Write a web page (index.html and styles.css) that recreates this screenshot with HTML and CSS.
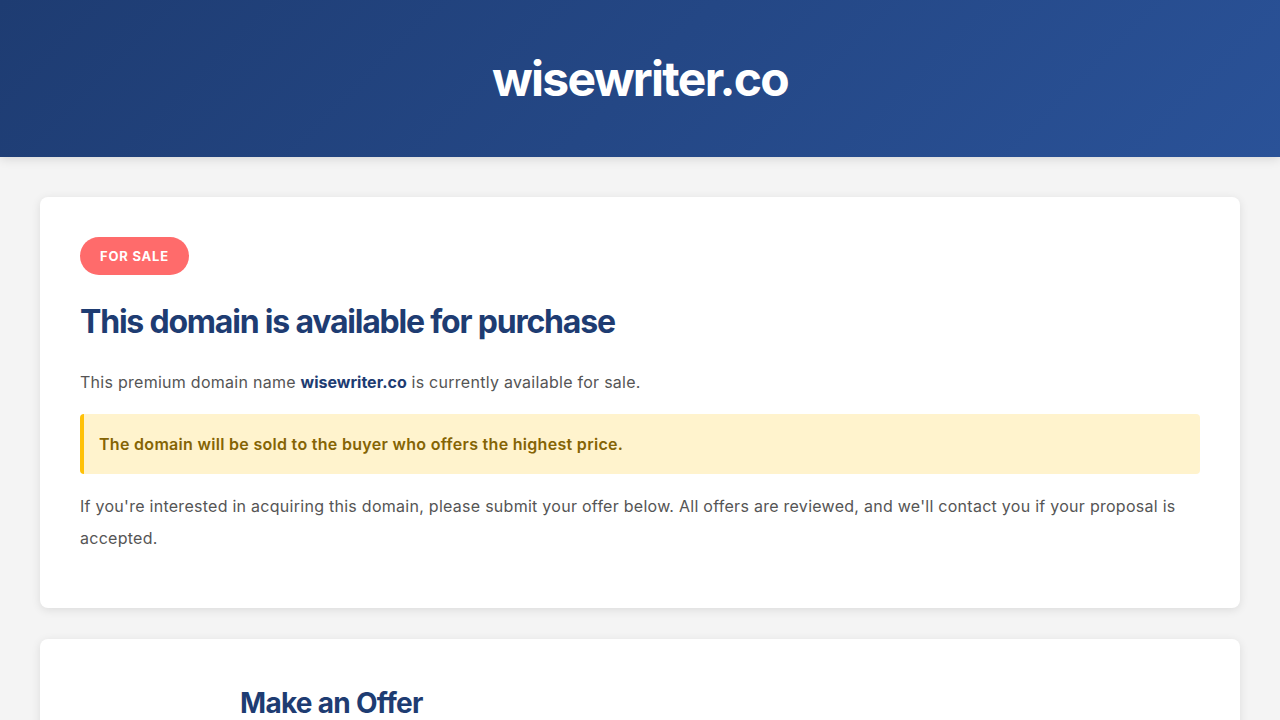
FILE: index.html
```html
<!DOCTYPE html>
<html lang="en">
<head>
<meta charset="utf-8">
<title>wisewriter.co - Domain For Sale</title>
<link rel="stylesheet" href="styles.css">
</head>
<body>
<header class="site-header">
  <h1 class="site-title">wisewriter.co</h1>
</header>
<main class="container">
  <section class="card">
    <span class="badge">FOR SALE</span>
    <h2 class="card-title">This domain is available for purchase</h2>
    <p class="text">This premium domain name <strong class="domain">wisewriter.co</strong> is currently available for sale.</p>
    <div class="notice">The domain will be sold to the buyer who offers the highest price.</div>
    <p class="text last">If you're interested in acquiring this domain, please submit your offer below. All offers are reviewed, and we'll contact you if your proposal is accepted.</p>
  </section>
  <section class="card">
    <div class="form-wrap">
      <h2 class="form-title">Make an Offer</h2>
    </div>
  </section>
</main>
</body>
</html>
```
FILE: styles.css
```css
* { box-sizing: border-box; }
html, body { margin: 0; padding: 0; }
body {
  background: #f4f4f4;
  font-family: Inter, "Noto Sans", sans-serif;
  color: #555;
}
.site-header {
  background: linear-gradient(135deg, #1e3c72 0%, #2a5298 100%);
  padding: 40px 20px;
  text-align: center;
  box-shadow: 0 2px 10px rgba(0,0,0,0.12);
  position: relative;
}
.site-title {
  margin: 0;
  color: #fff;
  font-size: 48px;
  line-height: 77px;
  font-weight: 700;
  letter-spacing: -1.7px;
}
.container {
  max-width: 1200px;
  margin: 0 auto;
  padding: 40px 0;
}
.card {
  background: #fff;
  border-radius: 8px;
  box-shadow: 0 2px 10px rgba(0,0,0,0.1);
  padding: 40px;
  margin-bottom: 31px;
}
.badge {
  display: inline-block;
  background: #ff6b6b;
  color: #fff;
  font-size: 13px;
  font-weight: 700;
  letter-spacing: 0.8px;
  line-height: 18px;
  padding: 10px 20px;
  border-radius: 20px;
}
.card-title {
  margin: 23px 0 20px;
  font-size: 32px;
  line-height: 48px;
  font-weight: 700;
  color: #1e3c72;
  letter-spacing: -1.2px;
}
.text {
  margin: 0 0 16px;
  font-size: 16px;
  line-height: 32px;
  color: #555;
  letter-spacing: 0.27px;
}
.text.last { margin-bottom: 14px; }
.domain { color: #1e3c72; font-weight: 700; letter-spacing: 0; }
.notice {
  background: #fff3cd;
  border-left: 4px solid #ffc107;
  border-radius: 4px;
  color: #856404;
  font-size: 16px;
  font-weight: 600;
  line-height: 32px;
  letter-spacing: 0.3px;
  padding: 14px 15px;
  margin-bottom: 16px;
}
.form-wrap {
  max-width: 800px;
  margin: 0 auto;
}
.form-title {
  margin: 0;
  font-size: 28px;
  line-height: 48px;
  font-weight: 700;
  color: #1e3c72;
  letter-spacing: -0.7px;
}
```
